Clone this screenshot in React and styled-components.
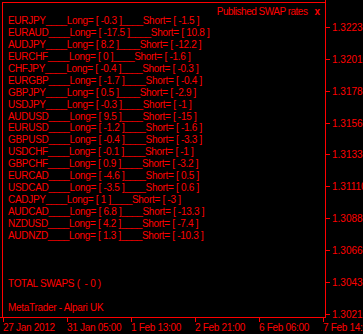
import React from 'react'
import styled, { createGlobalStyle } from 'styled-components'

const GlobalStyle = createGlobalStyle`
  html, body { margin: 0; padding: 0; background: #000; }
  body {
    font-family: "Liberation Sans", Arial, sans-serif;
    font-size: 10px;
    letter-spacing: -0.3px;
    color: #ff0000;
  }
`

const swaps = [
  ['EURJPY', '-0.3', '-1.5'],
  ['EURAUD', '-17.5', '10.8'],
  ['AUDJPY', '8.2', '-12.2'],
  ['EURCHF', '0', '-1.6'],
  ['CHFJPY', '-0.4', '-0.3'],
  ['EURGBP', '-1.7', '-0.4'],
  ['GBPJPY', '0.5', '-2.9'],
  ['USDJPY', '-0.3', '-1'],
  ['AUDUSD', '9.5', '-15'],
  ['EURUSD', '-1.2', '-1.6'],
  ['GBPUSD', '-0.4', '-3.3'],
  ['USDCHF', '-0.1', '-1'],
  ['GBPCHF', '0.9', '-3.2'],
  ['EURCAD', '-4.6', '0.5'],
  ['USDCAD', '-3.5', '0.6'],
  ['CADJPY', '1', '-3'],
  ['AUDCAD', '6.8', '-13.3'],
  ['NZDUSD', '4.2', '-7.4'],
  ['AUDNZD', '1.3', '-10.3'],
]

const prices = ['1.32235', '1.32010', '1.31785', '1.31560', '1.31335', '1.31110', '1.30885', '1.30660', '1.30435', '1.30210']
const times = ['27 Jan 2012', '31 Jan 05:00', '1 Feb 13:00', '2 Feb 21:00', '6 Feb 06:00', '7 Feb 14:00']

const App = () => {
  return (
    <>
      <GlobalStyle />
      <Chart>
        <Plot>
          <Panel>
            <Title>
              Published SWAP rates<Close>x</Close>
            </Title>
            <List>
              {swaps.map(([pair, long, short]) => (
                <Row key={pair}>{`${pair}____Long= [ ${long} ]____Short= [ ${short} ]`}</Row>
              ))}
            </List>
            <Footer>
              <Row>{'TOTAL SWAPS (  - 0 )'}</Row>
              <Row>MetaTrader - Alpari UK</Row>
            </Footer>
          </Panel>
        </Plot>
        <PriceAxis>
          {prices.map((p) => (
            <Price key={p}>
              <PriceTick />
              {p}
            </Price>
          ))}
        </PriceAxis>
        <TimeAxis>
          {times.map((t) => (
            <Time key={t}>
              <TimeTick />
              {t}
            </Time>
          ))}
        </TimeAxis>
      </Chart>
    </>
  )
}

export default App

const Chart = styled.div`
  display: grid;
  grid-template-columns: 326px 37px;
  grid-template-rows: 318px 16px;
  width: 363px;
  height: 334px;
  overflow: hidden;
`
const Plot = styled.div`
  border-right: 1px solid #ff0000;
  border-bottom: 1px solid #ff0000;
  display: flex;
  padding: 2px 0 0 2px;
`
const Panel = styled.div`
  flex: 1;
  display: flex;
  flex-direction: column;
  border-top: 1px solid #ff0000;
  border-left: 1px solid #ff0000;
  padding: 0 5px 3px 5px;
`
const Title = styled.div`
  display: flex;
  justify-content: flex-end;
  align-items: center;
  gap: 7px;
  height: 12px;
  line-height: 12px;
  margin-top: 3px;
  white-space: nowrap;
  letter-spacing: -0.5px;
`
const Close = styled.span`
  font-weight: bold;
  letter-spacing: 0;
`
const List = styled.div`
  display: flex;
  flex-direction: column;
  margin-top: -3px;
`
const Row = styled.div`
  height: 11.94px;
  line-height: 11.94px;
  white-space: pre;
`
const Footer = styled.div`
  margin-top: auto;
  display: flex;
  flex-direction: column;
  gap: 12px;
`
const PriceAxis = styled.div`
  display: flex;
  flex-direction: column;
  padding-top: 11.3px;
`
const Price = styled.div`
  display: flex;
  align-items: center;
  height: 31.93px;
  flex: none;
  gap: 2px;
  white-space: nowrap;
  letter-spacing: 0;
`
const PriceTick = styled.span`
  width: 4px;
  height: 1px;
  background: #ff0000;
  flex: none;
`
const TimeAxis = styled.div`
  grid-column: 1 / span 2;
  display: flex;
  padding-left: 3px;
  overflow: hidden;
`
const Time = styled.div`
  display: flex;
  flex-direction: column;
  width: 64px;
  flex: none;
  white-space: nowrap;
  line-height: 11px;
`
const TimeTick = styled.span`
  width: 1px;
  height: 4px;
  background: #ff0000;
`
